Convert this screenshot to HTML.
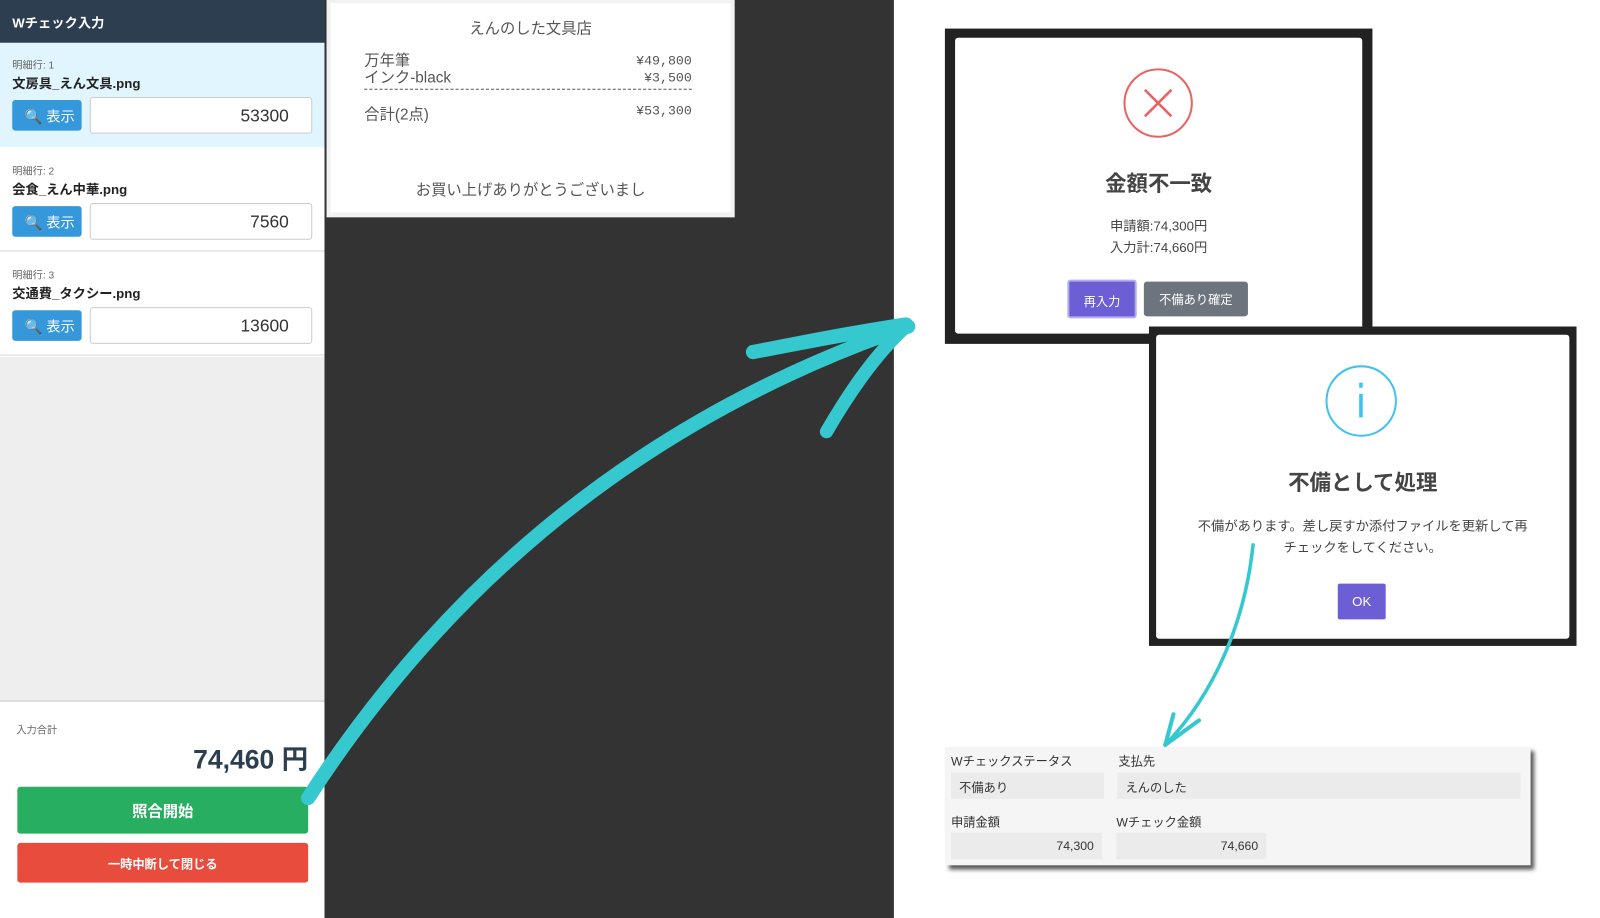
<!DOCTYPE html>
<html><head><meta charset="utf-8"><style>
*{box-sizing:border-box;margin:0;padding:0}
body{width:1600px;height:900px;background:#fff;position:relative;overflow:hidden;font-family:"Liberation Sans","Noto Sans CJK JP",sans-serif;color:#222}
#w{position:absolute;left:0;top:0;width:1568px;height:882px;transform:scale(1.0204);transform-origin:0 0}
.abs{position:absolute}
.hdr{left:0;top:0;width:318px;height:42px;background:#2c3e50;color:#fff;font-weight:bold;font-size:13px;padding:12px 12px}
.row{left:0;width:318px;height:101px;background:#fff;border-bottom:2px solid #eaeaea}
.row .l{position:absolute;left:12px;top:13px;font-size:10px;color:#666}
.row .f{position:absolute;left:12px;top:29px;font-size:13px;font-weight:bold;color:#222}
.row .b{position:absolute;left:12px;top:56px;width:68px;height:30px;background:#3498db;border-radius:3px;color:#fff;font-size:14px;padding:6px 0 0 12px}
.row .i{position:absolute;left:88px;top:53px;width:218px;height:36px;background:#fff;border:1px solid #ccc;border-radius:3px;text-align:right;padding:8px 22px 0 0;font-size:17px;color:#333}
.btn{border-radius:3px;color:#fff;font-weight:bold;text-align:center}
.m{background:#222}
.mi{background:#fff;border-radius:3px}
.lbl{font-size:12px;color:#333}
.fld{background:#ebebeb;font-size:12px;color:#333;padding:6px 8px}
</style></head><body><div id="w">
<div class="abs hdr">Wチェック入力</div>
<div class="abs row" style="top:42px;background:#e1f5fe;height:102px;border:none"><div class="l">明細行: 1</div><div class="f">文房具_えん文具.png</div><div class="b">🔍 表示</div><div class="i">53300</div></div>
<div class="abs row" style="top:146px"><div class="l">明細行: 2</div><div class="f">会食_えん中華.png</div><div class="b">🔍 表示</div><div class="i">7560</div></div>
<div class="abs row" style="top:248px"><div class="l">明細行: 3</div><div class="f">交通費_タクシー.png</div><div class="b">🔍 表示</div><div class="i">13600</div></div>
<div class="abs" style="left:0;top:350px;width:318px;height:338px;background:#eee;border-bottom:2px solid #ddd"></div>
<div class="abs" style="left:16px;top:707px;font-size:10px;color:#666">入力合計</div>
<div class="abs" style="left:150px;top:724px;width:152px;text-align:right;font-size:26px;font-weight:bold;color:#2c3e50">74,460 円</div>
<div class="abs btn" style="left:17px;top:771px;width:285px;height:46px;background:#27ae60;font-size:15px;padding-top:13px">照合開始</div>
<div class="abs btn" style="left:17px;top:826px;width:285px;height:39px;background:#e74c3c;font-size:12px;padding-top:12px">一時中断して閉じる</div>
<div class="abs" style="left:318px;top:0;width:558px;height:900px;background:#333"></div>
<div class="abs" style="left:320px;top:0;width:400px;height:213px;background:#f2f2f2"></div>
<div class="abs" style="left:324px;top:3px;width:392px;height:205px;background:#fff;color:#555;font-size:15px">
<div class="abs" style="left:0;top:14px;width:392px;text-align:center">えんのした文具店</div>
<div class="abs" style="left:33px;top:48px;line-height:17px">万年筆<br>インク-black</div>
<div class="abs" style="right:38px;top:48px;line-height:17px;font-family:'Liberation Mono',monospace;font-size:13px;text-align:right">¥49,800<br>¥3,500</div>
<div class="abs" style="left:33px;top:84px;width:321px;border-top:1px dashed #555"></div>
<div class="abs" style="left:33px;top:98px">合計(2点)</div>
<div class="abs" style="right:38px;top:98px;font-family:'Liberation Mono',monospace;font-size:13px">¥53,300</div>
<div class="abs" style="left:0;top:172px;width:392px;text-align:center">お買い上げありがとうございまし</div>
</div>
<div class="abs m" style="left:926px;top:28px;width:419px;height:309px"></div>
<div class="abs mi" style="left:936px;top:37px;width:399px;height:290px"></div>
<svg class="abs" style="left:1100px;top:66px" width="70" height="70"><circle cx="35" cy="35" r="33" fill="none" stroke="#e86464" stroke-width="2"/><path d="M22 22L48 48M48 22L22 48" stroke="#e86464" stroke-width="2.5"/></svg>
<div class="abs" style="left:936px;top:164px;width:399px;text-align:center;font-size:21px;font-weight:bold;color:#444">金額不一致</div>
<div class="abs" style="left:936px;top:211px;width:399px;text-align:center;font-size:13px;color:#444;line-height:21px">申請額:74,300円<br>入力計:74,660円</div>
<div class="abs" style="left:1046px;top:274px;width:68px;height:38px;background:#6c5fd6;border:2px solid #b3acef;border-radius:3px;color:#fff;font-size:12px;text-align:center;padding-top:11px">再入力</div>
<div class="abs" style="left:1121px;top:276px;width:102px;height:34px;background:#6c757d;border-radius:3px;color:#fff;font-size:12px;text-align:center;padding-top:9px">不備あり確定</div>
<div class="abs m" style="left:1126px;top:320px;width:419px;height:313px"></div>
<div class="abs mi" style="left:1133px;top:328px;width:405px;height:298px"></div>
<svg class="abs" style="left:1298px;top:357px" width="72" height="72"><circle cx="36" cy="36" r="34" fill="none" stroke="#3fc3ee" stroke-width="2"/><rect x="34" y="29" width="3.5" height="23" fill="#3fc3ee"/><rect x="34" y="18" width="3.5" height="5" fill="#3fc3ee"/></svg>
<div class="abs" style="left:1133px;top:457px;width:405px;text-align:center;font-size:21px;font-weight:bold;color:#444">不備として処理</div>
<div class="abs" style="left:1133px;top:505px;width:405px;text-align:center;font-size:13px;color:#444;line-height:21px;white-space:nowrap">不備があります。差し戻すか添付ファイルを更新して再<br>チェックをしてください。</div>
<div class="abs" style="left:1311px;top:572px;width:47px;height:35px;background:#6c5fd6;border-radius:2px;color:#fff;font-size:13px;text-align:center;padding-top:10px">OK</div>
<div class="abs" style="left:926px;top:732px;width:574px;height:116px;background:#f5f5f5;box-shadow:4px 4px 4px #555"></div>
<div class="abs lbl" style="left:932px;top:737px">Wチェックステータス</div>
<div class="abs lbl" style="left:1096px;top:737px">支払先</div>
<div class="abs fld" style="left:932px;top:757px;width:150px;height:26px">不備あり</div>
<div class="abs fld" style="left:1095px;top:757px;width:395px;height:26px">えんのした</div>
<div class="abs lbl" style="left:932px;top:797px">申請金額</div>
<div class="abs lbl" style="left:1094px;top:797px">Wチェック金額</div>
<div class="abs fld" style="left:932px;top:816px;width:148px;height:26px;text-align:right">74,300</div>
<div class="abs fld" style="left:1094px;top:816px;width:147px;height:26px;text-align:right">74,660</div>
<svg class="abs" style="left:0;top:0" width="1600" height="900">
<g fill="none" stroke="#36c8cf" stroke-linecap="round">
<path d="M302 782 C420 600 600 420 890 320" stroke-width="14"/>
<path d="M738 345 C790 335 840 325 888 318" stroke-width="14"/>
<path d="M810 423 C835 380 860 345 888 320" stroke-width="13"/>
<path d="M1228 534 C1220 610 1190 680 1142 730" stroke-width="3.5"/>
<path d="M1142 730 L1175 706" stroke-width="4"/>
<path d="M1142 730 L1150 700" stroke-width="4"/>
</g></svg>
</div></body></html>
